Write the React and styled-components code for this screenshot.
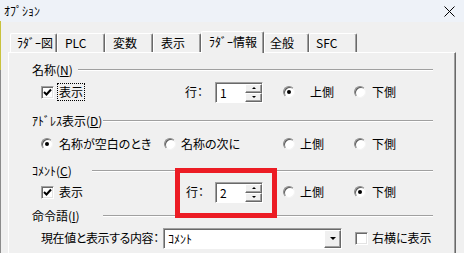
import React from 'react';
import styled, { createGlobalStyle } from 'styled-components';

const Global = createGlobalStyle`
  html, body { margin: 0; padding: 0; background: #f0f0f0; overflow: hidden; }
  body {
    font-family: "Noto Sans CJK JP", "Noto Sans", sans-serif;
    font-size: 12px;
    color: #000;
  }
  * { box-sizing: border-box; }
`;

const Window = styled.div`
  position: relative;
  width: 464px;
  height: 253px;
  overflow: hidden;
  background: #f0f0f0;
  border-left: 1px solid transparent;
  border-image: linear-gradient(to bottom, #eef2f8 0px, #eef2f8 22px, #c9c23c 22px, #c9c23c 70px, #8c8c8c 70px, #8c8c8c 100%) 1;
  font-feature-settings: "palt";
  display: flex;
  flex-direction: column;
`;

const TitleBar = styled.div`
  height: 22px;
  flex: none;
  background: #eef2f8;
  display: flex;
  align-items: center;
  justify-content: space-between;
  padding: 0 9px 0 3px;
  font-size: 12px;
  line-height: 1;
`;

const Body = styled.div`
  flex: 1;
  display: flex;
  flex-direction: column;
  padding: 9px 0 0 7px;
`;

const TabStrip = styled.div`
  display: flex;
  align-items: flex-end;
  height: 21px;
  padding-left: 2px;
  flex: none;
`;

const Tab = styled.div`
  position: relative;
  z-index: ${p => (p.$active ? 2 : 1)};
  width: ${p => p.$w}px;
  height: ${p => (p.$active ? 22 : 19)}px;
  margin-bottom: ${p => (p.$active ? -1 : 0)}px;
  background: #f0f0f0;
  border-top: 1px solid #fff;
  border-left: 1px solid #fff;
  border-right: 1px solid #696969;
  box-shadow: inset -1px 0 #a0a0a0;
  border-radius: 2px 2px 0 0;
  padding-left: ${p => p.$pad}px;
  padding-top: ${p => (p.$active ? 3 : 2)}px;
  font-size: 12px;
  line-height: 14px;
  white-space: nowrap;
`;

const Panel = styled.div`
  flex: 1;
  width: 448px;
  display: flex;
  flex-direction: column;
  border-top: 1px solid #fff;
  border-left: 1px solid #fff;
  border-right: 1px solid #696969;
  box-shadow: inset -1px 0 #a0a0a0;
  padding: 9px 22px 0 23px;
`;

const GroupHeader = styled.div`
  display: flex;
  align-items: center;
  height: 16px;
  margin-top: ${p => p.$mt}px;
`;

const HeaderLabel = styled.div`
  width: ${p => p.$w}px;
  flex: none;
  white-space: nowrap;
  line-height: 16px;
  u { text-decoration: underline; text-underline-offset: 1px; }
`;

const HeaderLine = styled.div`
  flex: 1;
  height: 2px;
  border-top: 1px solid #a0a0a0;
  border-bottom: 1px solid #fff;
`;

const Row = styled.div`
  display: flex;
  align-items: center;
  height: 24px;
  padding-left: 9px;
  margin-top: ${p => p.$mt}px;
`;

const Cell = styled.div`
  display: flex;
  align-items: center;
  flex: none;
  width: ${p => (p.$w ? `${p.$w}px` : 'auto')};
  margin-left: ${p => p.$ml || 0}px;
  white-space: nowrap;
`;

const Text = styled.span`
  margin-left: ${p => p.$gap || 0}px;
  letter-spacing: ${p => p.$ls || 0}px;
  line-height: 14px;
  white-space: nowrap;
`;

const FocusText = styled.span`
  margin-left: 3px;
  padding: 1px 1px;
  border: 1px dotted ${p => (p.$focus ? '#000' : 'transparent')};
  line-height: 14px;
`;

const Box = styled.span`
  width: 13px;
  height: 13px;
  flex: none;
  display: flex;
  align-items: center;
  justify-content: center;
  background: #fff;
  border: 1px solid;
  border-color: #a0a0a0 #fff #fff #a0a0a0;
  box-shadow: inset 1px 1px #696969, inset -1px -1px #e3e3e3;
`;

const Radio = styled.span`
  width: 12px;
  height: 12px;
  flex: none;
  border-radius: 50%;
  display: flex;
  align-items: center;
  justify-content: center;
  background: #fff;
  border: 1px solid;
  border-color: #8a8a8a #f4f4f4 #f4f4f4 #8a8a8a;
  box-shadow: inset 1px 1px #5c5c5c;
  &::after {
    content: '';
    width: 4px;
    height: 4px;
    border-radius: 50%;
    background: ${p => (p.$on ? '#000' : 'transparent')};
  }
`;

const Sunken = styled.div`
  display: flex;
  flex: none;
  width: ${p => p.$w}px;
  height: ${p => p.$h}px;
  background: #fff;
  border: 1px solid;
  border-color: #a0a0a0 #fff #fff #a0a0a0;
  box-shadow: inset 1px 1px #696969;
  padding: 1px 0 0 1px;
`;

const FieldText = styled.div`
  flex: 1;
  padding-left: 3px;
  line-height: 17px;
  font-size: 12px;
`;

const SpinButtons = styled.div`
  width: 17px;
  display: flex;
  flex-direction: column;
  flex: none;
`;

const RaisedButton = styled.div`
  flex: 1;
  display: flex;
  align-items: center;
  justify-content: center;
  background: #f0f0f0;
  border: 1px solid;
  border-color: #fff #696969 #696969 #fff;
  box-shadow: inset -1px -1px #a0a0a0;
`;

const Arrow = styled.span`
  width: 0;
  height: 0;
  border-left: ${p => p.$s}px solid transparent;
  border-right: ${p => p.$s}px solid transparent;
  ${p => (p.$up ? `border-bottom: ${p.$s}px solid #000;` : `border-top: ${p.$s}px solid #000;`)}
`;

const ComboButton = styled(RaisedButton)`
  flex: none;
  width: 17px;
`;

const RedMark = styled.div`
  position: absolute;
  left: 174px;
  top: 168px;
  width: 102px;
  height: 50px;
  border: 5px solid #ec1c24;
  pointer-events: none;
`;

const Check = () => (
  <svg width="9" height="9" viewBox="0 0 9 9">
    <polyline points="1,4 3.5,6.5 8,1.5" fill="none" stroke="#000" strokeWidth="2" />
  </svg>
);

const CloseIcon = () => (
  <svg width="11" height="11" viewBox="0 0 11 11">
    <path d="M0.5 0.5 L10.5 10.5 M10.5 0.5 L0.5 10.5" stroke="#000" strokeWidth="1" />
  </svg>
);

const Spin = ({ value }) => (
  <Sunken $w={48} $h={21}>
    <FieldText>{value}</FieldText>
    <SpinButtons>
      <RaisedButton><Arrow $up $s={2} /></RaisedButton>
      <RaisedButton><Arrow $s={2} /></RaisedButton>
    </SpinButtons>
  </Sunken>
);

const tabs = [
  { t: 'ﾗﾀﾞｰ図', w: 47, pad: 6 },
  { t: 'PLC', w: 48, pad: 7 },
  { t: '変数', w: 48, pad: 7 },
  { t: '表示', w: 48, pad: 7 },
  { t: 'ﾗﾀﾞｰ情報', w: 63, pad: 7, active: true },
  { t: '全般', w: 45, pad: 5 },
  { t: 'SFC', w: 48, pad: 6 },
];

export default function App() {
  return (
    <>
      <Global />
      <Window>
        <TitleBar>
          <span>ｵﾌﾟｼｮﾝ</span>
          <CloseIcon />
        </TitleBar>
        <Body>
          <TabStrip>
            {tabs.map(tab => (
              <Tab key={tab.t} $w={tab.w} $pad={tab.pad} $active={tab.active}>{tab.t}</Tab>
            ))}
          </TabStrip>
          <Panel>
            <GroupHeader $mt={0}>
              <HeaderLabel $w={46}>名称(<u>N</u>)</HeaderLabel>
              <HeaderLine />
            </GroupHeader>
            <Row $mt={2}>
              <Cell $w={144}>
                <Box><Check /></Box>
                <FocusText $focus>表示</FocusText>
              </Cell>
              <Cell $w={30}><Text>行：</Text></Cell>
              <Spin value="1" />
              <Cell $w={71} $ml={20}><Radio $on /><Text $gap={15}>上側</Text></Cell>
              <Cell><Radio /><Text $gap={6}>下側</Text></Cell>
            </Row>

            <GroupHeader $mt={9}>
              <HeaderLabel $w={71}>ｱﾄﾞﾚｽ表示(<u>D</u>)</HeaderLabel>
              <HeaderLine />
            </GroupHeader>
            <Row $mt={3}>
              <Cell $w={123}><Radio $on /><Text $gap={6}>名称が空白のとき</Text></Cell>
              <Cell $w={119}><Radio /><Text $gap={5}>名称の次に</Text></Cell>
              <Cell $w={71}><Radio /><Text $gap={5}>上側</Text></Cell>
              <Cell><Radio /><Text $gap={6}>下側</Text></Cell>
            </Row>

            <GroupHeader $mt={7}>
              <HeaderLabel $w={60}>ｺﾒﾝﾄ(<u>C</u>)</HeaderLabel>
              <HeaderLine />
            </GroupHeader>
            <Row $mt={1}>
              <Cell $w={145}>
                <Box><Check /></Box>
                <FocusText>表示</FocusText>
              </Cell>
              <Cell $w={29}><Text>行：</Text></Cell>
              <Spin value="2" />
              <Cell $w={71} $ml={20}><Radio /><Text $gap={5}>上側</Text></Cell>
              <Cell><Radio $on /><Text $gap={6}>下側</Text></Cell>
            </Row>

            <GroupHeader $mt={4}>
              <HeaderLabel $w={71}>命令語(<u>I</u>)</HeaderLabel>
              <HeaderLine />
            </GroupHeader>
            <Row $mt={2}>
              <Cell $w={122}><Text $ls={-0.4}>現在値と表示する内容：</Text></Cell>
              <Sunken $w={179} $h={21}>
                <FieldText>ｺﾒﾝﾄ</FieldText>
                <ComboButton><Arrow $s={3.5} /></ComboButton>
              </Sunken>
              <Cell $ml={13}><Box /><Text $gap={4}>右横に表示</Text></Cell>
            </Row>
          </Panel>
        </Body>
        <RedMark />
      </Window>
    </>
  );
}
